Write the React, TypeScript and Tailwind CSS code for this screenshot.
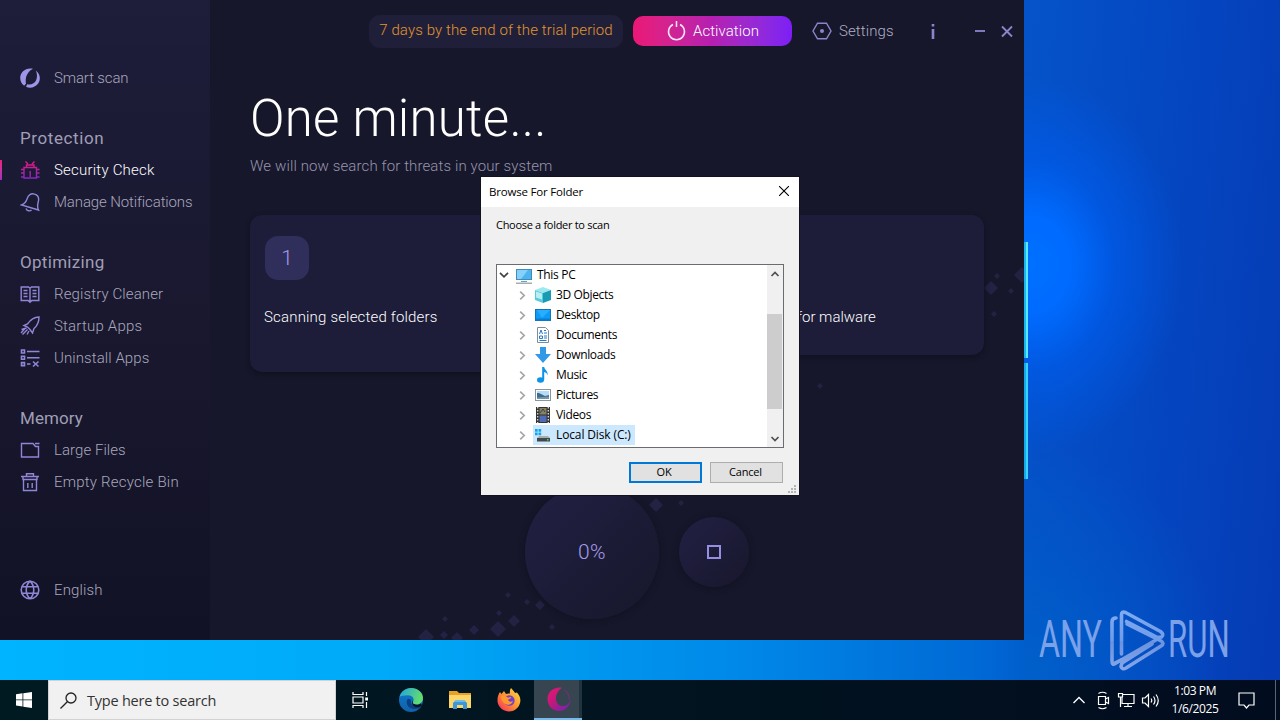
import type { ReactNode } from "react";

const DIAMONDS: [number, number, number][] = [
  [426, 637, 8], [444, 635, 4], [457, 638, 6], [445, 619, 3], [474, 630, 5], [498, 629, 8],
  [514, 621, 6], [499, 613, 3], [508, 595, 3], [527, 602, 3], [540, 605, 5], [552, 627, 3],
  [656, 505, 7], [681, 503, 3], [991, 288, 7], [997, 276, 3], [1011, 291, 3], [1022, 275, 8],
  [994, 314, 3], [820, 386, 3],
];

function Glyph({ children, active = false }: { children: ReactNode; active?: boolean }) {
  return (
    <svg
      width="20"
      height="20"
      viewBox="0 0 20 20"
      fill="none"
      stroke={active ? "url(#hot)" : "#8f87d6"}
      strokeWidth="1.4"
      className="shrink-0"
    >
      {children}
    </svg>
  );
}

function NavItem({ label, icon, active = false, tracking = "" }: { label: string; icon: ReactNode; active?: boolean; tracking?: string }) {
  return (
    <div className="relative flex h-8 items-center gap-[14px] pl-5">
      {active && <span className="absolute left-0 top-[6px] h-5 w-[2px] bg-gradient-to-b from-[#f0197a] to-[#a02fc0]" />}
      <Glyph active={active}>{icon}</Glyph>
      <span className={`whitespace-nowrap text-[15px] font-light leading-5 ${tracking} ${active ? "text-white" : "text-[#a9a8bd]"}`}>{label}</span>
    </div>
  );
}

function NavHeading({ children, tracking }: { children: ReactNode; tracking: string }) {
  return <div className={`flex h-8 items-center pl-5 text-[17px] font-normal leading-5 text-[#a09fb5] ${tracking}`}>{children}</div>;
}

function Sidebar() {
  return (
    <nav className="flex w-[210px] shrink-0 flex-col gap-7 bg-gradient-to-b from-[#1e1d3a] via-[#19182f] to-[#121226] pb-[34px] pt-[62px]">
      <NavItem
        label="Smart scan"
        tracking="tracking-[-0.13px]"
        icon={
          <g stroke="none" fill="#9d95e6">
            <path d="M13 .8C6-.9.2 4 .2 10c0 3.300 1.500 6 4 7.800.8-1 1.300-1.600 1.800-2C4.800 9.500 7.500 3.500 13 .8z" />
            <path d="M15.800 2.500c4.400 3.200 5.200 9 2.400 13-2.900 4-8 5.200-12.200 3.300l1.200-2.600c4 .8 7.600-.7 9-4.200 1.200-3.200 1-6.500-.4-9.500z" />
          </g>
        }
      />
      <div>
        <NavHeading tracking="tracking-[0.6px]">Protection</NavHeading>
        <NavItem
          active
          label="Security Check"
          tracking="tracking-[0.22px]"
          icon={<path d="M4 7.500h12.500v10.500H4zM6.500 7.500V5h7.500v2.500M5.500 1.500l2.500 2.500M14.500 1.500L12 4M1 9.500h3M1 13h3M1 17h3M16.500 9.500H19.500M16.500 13H19.500M16.500 17H19.500M10.200 11v6" />}
        />
        <NavItem
          label="Manage Notifications"
          tracking="tracking-[-0.12px]"
          icon={<path d="M1.500 13c3-1 4.500-3 5.500-6 1.200-4 4-6 7.500-4.900 3.500 1 4.700 4.300 3.700 7.900-.8 3-1 5.500.3 8L1.500 13zM6 16.500c.7 2.300 3.900 3.200 5.500 1.500" />}
        />
      </div>
      <div>
        <NavHeading tracking="tracking-[0.3px]">Optimizing</NavHeading>
        <NavItem
          label="Registry Cleaner"
          tracking="tracking-[0.12px]"
          icon={<path d="M1.200 3h7.300L10 4.300 11.500 3h7.300v13.500h-7L10 18.300l-1.800-1.800h-7zM10 4.300v13.500M3.500 6.500h4M3.500 9.500h4M3.500 12.500h4M12.500 6.500h4M12.500 9.500h4M12.500 12.500h4" />}
        />
        <NavItem
          label="Startup Apps"
          tracking="tracking-[0.2px]"
          icon={<path d="M19 1c-5 .2-8.500 2.500-11.500 7L4 9.500 7.500 11l2.500 2.500 2.500 3.500 1.500-4.500C17.500 9.500 19 6 19 1zM6.500 12l-5 1.500M7.500 13.500l-5 5M9 15l-2 3.500M5 12.500L1 17" />}
        />
        <NavItem
          label="Uninstall Apps"
          tracking="tracking-[0.08px]"
          icon={<path d="M1.500 2h3v3h-3zM1.500 8.300h3v3h-3zM1.500 14.600h3v3h-3zM7 3.500h12.500M7 9.800h12.500M7 16h3.500M13 13.500l5.500 5M18.500 13.500l-5.500 5" strokeWidth="1.600" />}
        />
      </div>
      <div>
        <NavHeading tracking="tracking-[0.1px]">Memory</NavHeading>
        <NavItem
          label="Large Files"
          tracking="tracking-[0.05px]"
          icon={<path d="M1.500 3.500h11.500l2.500 3h3V17H1.500zM15 3.500h4.500" />}
        />
        <NavItem
          label="Empty Recycle Bin"
          tracking="tracking-[0.22px]"
          icon={<path d="M1 4.500h18M3 4.500v3h14v-3M6.500 4V1.800h7V4M3.500 7.500v11h13v-11M7.800 11v5M12.200 11v5" />}
        />
      </div>
      <div className="mt-auto">
        <NavItem
          label="English"
          tracking="tracking-[0.15px]"
          icon={<path d="M10 1.200a8.800 8.800 0 1 0 0 17.600a8.800 8.800 0 1 0 0-17.600M10 1.200c-5 4.800-5 12.800 0 17.600M10 1.200c5 4.800 5 12.800 0 17.600M2 6.800h16M2 13.200h16" strokeWidth="1.600" />}
        />
      </div>
    </nav>
  );
}

function ScannerWindow() {
  return (
    <div className="absolute left-0 top-0 flex h-[640px] w-[1024px] overflow-hidden bg-[#17172b] font-[Roboto,sans-serif]">
      <svg width="1024" height="640" className="absolute left-0 top-0">
        <defs>
          <linearGradient id="hot" gradientUnits="userSpaceOnUse" x1="0" y1="0" x2="0" y2="20">
            <stop offset="0" stopColor="#f01878" />
            <stop offset="1" stopColor="#7a2bc4" />
          </linearGradient>
        </defs>
        {DIAMONDS.map(([x, y, r]) => (
          <path key={`${x}-${y}`} d={`M${x} ${y - r}L${x + r} ${y}L${x} ${y + r}L${x - r} ${y}Z`} fill="#242242" />
        ))}
      </svg>
      <Sidebar />
      <main className="relative flex flex-1 flex-col">
        <header className="flex h-[62px] items-center justify-end pr-[5px]">
          <div className="flex h-[33px] w-[254px] items-center justify-center rounded-[11px] bg-[#201f39] pb-[2px] text-[15px] font-light tracking-[0.12px] text-[#e0952f]">
            <span className="whitespace-nowrap">7 days by the end of the trial period</span>
          </div>
          <div className="ml-[10px] flex h-[30px] w-[159px] items-center justify-center gap-[7px] rounded-[10px] bg-gradient-to-r from-[#eb1675] via-[#b51eb0] to-[#7c1ef5] pl-px text-[15px] font-light tracking-[0.08px] text-white">
            <svg width="19" height="20" viewBox="0 0 19 20" fill="none" stroke="#fbe6fa" strokeWidth="1.5">
              <path d="M6 3.500a8 8 0 1 0 7 0M9.500 0v6" />
            </svg>
            <span>Activation</span>
          </div>
          <div className="ml-5 flex w-[82px] items-center gap-[7px] text-[15px] font-light tracking-[0.1px] text-[#b0afc6]">
            <svg width="20" height="18" viewBox="0 0 20 18" fill="none" stroke="#8b85cc" strokeWidth="1.4" className="shrink-0">
              <path d="M5.500 1.200h9L19 9l-4.500 7.800h-9L1 9z" />
              <circle cx="10" cy="9" r="2" fill="#8b85cc" stroke="none" />
            </svg>
            <span>Settings</span>
          </div>
          <svg width="125" height="20" viewBox="0 0 125 20" fill="none" stroke="#8b85cc" strokeWidth="1.8" className="shrink-0">
            <path d="M39 8v10M39 3v2.500" strokeWidth="2.600" />
            <path d="M81 10h10" />
            <path d="M108 5.500l10 10M118 5.500l-10 10" strokeWidth="1.800" />
          </svg>
        </header>
        <h1 className="ml-10 mt-[26px] h-[62px] whitespace-nowrap text-[51px] font-light leading-[62px] tracking-[0.25px] text-white">One minute...</h1>
        <p className="ml-10 mt-[6px] h-5 whitespace-nowrap text-[15px] font-light leading-5 tracking-[0.12px] text-[#9695ad]">We will now search for threats in your system</p>
        <div className="mx-10 mt-[39px] flex items-start gap-5">
          <section className="h-[157px] w-[357px] shrink-0 rounded-[12px] bg-[#1d1c39] px-[14px] pt-[21px] shadow-[0_2px_5px_#10101f]">
            <div className="ml-px flex size-11 items-center justify-center rounded-[13px] bg-[#302e5a] pt-px text-[21px] font-light text-[#a49ce8]">1</div>
            <div className="mt-[27px] whitespace-nowrap text-[15px] font-light leading-5 tracking-[0.18px] text-white">Scanning selected folders</div>
          </section>
          <section className="h-[140px] w-[357px] shrink-0 rounded-[12px] bg-[#1d1c39] pl-[170px] pt-[92px] shadow-[0_2px_5px_#10101f]">
            <div className="whitespace-nowrap text-[15px] font-light leading-5 text-white">for malware</div>
          </section>
        </div>
        <div className="ml-[315px] mt-[113px] flex items-center gap-5">
          <div className="flex size-[134px] items-center justify-center rounded-full bg-gradient-to-br from-[#222044] to-[#17172b] pt-[2px] text-[21px] font-light tracking-[0.4px] text-[#a49ce8] shadow-[0_1px_6px_#111122]">0%</div>
          <div className="flex size-[70px] items-center justify-center rounded-full bg-gradient-to-br from-[#222044] to-[#18172c] shadow-[0_1px_6px_#111122]">
            <div className="size-[14px] border-2 border-[#968ee0]" />
          </div>
        </div>
      </main>
    </div>
  );
}

const FOLDERS: { name: string; icon: ReactNode; selected?: boolean }[] = [
  {
    name: "3D Objects",
    icon: (
      <>
        <path d="M0 3l8-3 8 3-8 3z" fill="#9ceaf0" />
        <path d="M0 3l8 3v10l-8-3z" fill="#57cbdc" />
        <path d="M16 3l-8 3v10l8-3z" fill="#1a9bb5" />
        <path d="M1 4.500l6 2v6l-6-2z" fill="#b9eff2" />
      </>
    ),
  },
  {
    name: "Desktop",
    icon: (
      <>
        <rect x="0.500" y="2.500" width="15" height="11" fill="#0d9cf5" stroke="#1474ba" />
        <path d="M1 11.500h14v2H1z" fill="#0a7cd2" />
        <path d="M2 3h13l-8 8z" fill="#29adff" />
      </>
    ),
  },
  {
    name: "Documents",
    icon: (
      <>
        <path d="M2.500.5h8l3 3v12h-11z" fill="#fff" stroke="#7f8d99" />
        <path d="M4.500 7l1.500-4 1.500 4M9 3.500h2M9 6h3M4.500 9h3v2.500h-3zM9 9h3M9 11h3M4.500 13.500h7" stroke="#2878c8" fill="none" />
      </>
    ),
  },
  { name: "Downloads", icon: <path d="M5 0h6v7h5l-8 9-8-9h5z" fill="#3298e8" /> },
  {
    name: "Music",
    icon: (
      <>
        <ellipse cx="5.500" cy="13" rx="3.500" ry="2.800" fill="#0c93e8" />
        <path d="M7.200 0h2c.3 3 4.300 4 3.300 8.500-.5-2.200-1.500-3-3.300-3.500v8h-2z" fill="#0c93e8" />
      </>
    ),
  },
  {
    name: "Pictures",
    icon: (
      <>
        <rect x="0.500" y="2.500" width="15" height="11" fill="#fff" stroke="#8c959c" />
        <path d="M2 4h12v8H2z" fill="#b7dcf5" />
        <path d="M2 6c4 0 5 2 8 3l4-1v4H2z" fill="#3b6d92" />
        <path d="M2 10.500l12-1V12H2z" fill="#7595a8" />
      </>
    ),
  },
  {
    name: "Videos",
    icon: (
      <>
        <path d="M1 0h14v16H1z" fill="#333" />
        <path d="M4.500 1h7v6.500h-7z" fill="#8a8352" />
        <path d="M4.500 8.500h7V15h-7z" fill="#4f6cb8" />
        <path d="M2.700 0v16M13.300 0v16" stroke="#ddd" strokeWidth="1.300" strokeDasharray="1.500 1.500" />
        <path d="M5 6l3-4 2 3" stroke="#2c3d87" fill="none" />
      </>
    ),
  },
  {
    name: "Local Disk (C:)",
    selected: true,
    icon: (
      <>
        <path d="M0 2h2.700v2.700H0zM3.500 2h2.700v2.700H3.500zM0 5.500h2.700v2.700H0zM3.500 5.500h2.700v2.700H3.500z" fill="#14a5ee" />
        <path d="M4 9h9l2 2H2z" fill="#a9adb0" />
        <path d="M2 11h13v3.500H2z" fill="#43484a" />
        <path d="M12 12h1.500v1.500H12z" fill="#46e24c" />
      </>
    ),
  },
];

function FolderDialog() {
  return (
    <div className="absolute left-[481px] top-[177px] flex h-[318px] w-[318px] flex-col bg-[#f0f0f0] font-['Open_Sans',sans-serif] text-[12px] text-black shadow-[0_0_0_1px_#11111f]">
      <div className="flex h-[30px] shrink-0 items-center justify-between bg-white pl-2 pr-[10px]">
        <span className="whitespace-nowrap text-[11.500px] tracking-[-0.2px]">Browse For Folder</span>
        <svg width="10" height="10" viewBox="0 0 10 10" stroke="#000" strokeWidth="1.100" className="-mt-[2px]">
          <path d="M0 0l10 10M10 0L0 10" />
        </svg>
      </div>
      <div className="ml-[15px] mt-[10px] h-4 whitespace-nowrap text-[11px] leading-4 tracking-[-0.3px]">Choose a folder to scan</div>
      <div className="ml-[15px] mt-[31px] flex h-[184px] w-[288px] shrink-0 border border-[#696c70] bg-white">
        <div className="flex flex-1 flex-col overflow-hidden">
          <div className="flex h-5 shrink-0 items-center pl-[2px]">
            <svg width="10" height="6" viewBox="0 0 10 6" fill="none" stroke="#404040" strokeWidth="1.700">
              <path d="M1 .8l4 4 4-4" />
            </svg>
            <svg width="16" height="16" viewBox="0 0 16 16" className="ml-[7px] mt-[1px] shrink-0">
              <rect x="0.500" y="1.500" width="15" height="10" fill="#4db4f0" stroke="#428bb5" />
              <path d="M1 2h11L5 11H1z" fill="#86d1fa" />
              <path d="M5 13.500h6" stroke="#5aa6d0" />
              <path d="M0 15.200h16" stroke="#8d989e" strokeWidth="1.200" />
            </svg>
            <span className="ml-[5px] text-[12px] tracking-[-0.3px]">This PC</span>
          </div>
          {FOLDERS.map((f) => (
            <div key={f.name} className="flex h-5 shrink-0 items-center pl-[22px]">
              <svg width="7" height="9" viewBox="0 0 7 9" fill="none" stroke="#a6a6a6" strokeWidth="1.700">
                <path d="M1.200.7L5.200 4.500l-4 3.800" />
              </svg>
              <div className={`ml-[7px] flex h-5 items-center pl-[2px] pr-1 ${f.selected ? "bg-[#cce8ff]" : ""}`}>
                <svg width="16" height="16" viewBox="0 0 16 16" className="shrink-0">
                  {f.icon}
                </svg>
                <span className={`ml-[5px] whitespace-nowrap text-[12px] leading-5 ${f.selected ? "tracking-[-0.13px]" : "tracking-[-0.36px]"}`}>{f.name}</span>
              </div>
            </div>
          ))}
        </div>
        <div className="flex w-4 flex-col items-center bg-[#f0f0f0] pr-px">
          <svg width="10" height="6" viewBox="0 0 10 6" fill="none" stroke="#505050" strokeWidth="1.700" className="mt-[6px] shrink-0">
            <path d="M1.500 5l3.500-3.600L8.500 5" />
          </svg>
          <div className="mt-[37px] h-[95px] w-[15px] bg-[#cdcdcd]" />
          <svg width="10" height="6" viewBox="0 0 10 6" fill="none" stroke="#505050" strokeWidth="1.700" className="mb-[5px] mt-auto shrink-0">
            <path d="M1.500 1l3.500 3.600L8.500 1" />
          </svg>
        </div>
      </div>
      <div className="mt-[14px] flex gap-2 pl-[148px] text-[11px] tracking-[-0.2px]">
        <div className="flex h-[21px] w-[73px] items-center justify-center border-2 border-[#0078d7] bg-[#e1e1e1] pr-[3px]">OK</div>
        <div className="flex h-[21px] w-[73px] items-center justify-center border border-[#adadad] bg-[#e1e1e1] pr-[2px]">Cancel</div>
      </div>
      <svg width="9" height="9" viewBox="0 0 9 9" fill="#b4b4b4" className="absolute bottom-[1px] right-[2px]">
        <path d="M6 0h2v2H6zM3 3h2v2H3zM6 3h2v2H6zM0 6h2v2H0zM3 6h2v2H3zM6 6h2v2H6z" />
      </svg>
    </div>
  );
}

function Watermark() {
  return (
    <div className="absolute left-[1039px] top-[608px] flex h-16 w-[194px] items-center font-[Roboto,sans-serif] text-[52px] leading-[64px] text-[#7ba2e8]">
      <div className="w-[70px] shrink-0">
        <div className="w-max origin-left scale-x-[0.620]">ANY</div>
      </div>
      <svg width="56" height="64" viewBox="1109 608 56 64" className="shrink-0">
        <defs>
          <linearGradient id="wm" gradientUnits="userSpaceOnUse" x1="0" y1="612" x2="0" y2="670">
            <stop offset="0" stopColor="#80abf0" />
            <stop offset="0.500" stopColor="#709be8" />
            <stop offset="0.510" stopColor="#6a92e0" />
            <stop offset="1" stopColor="#86a6e8" />
          </linearGradient>
        </defs>
        <g fill="none" stroke="url(#wm)" strokeWidth="3.600" strokeLinejoin="round" strokeLinecap="round">
          <path d="M1121.500 654V615q0-4 4-2.500l35 19q4 3 1 5.500l-4 .5-31-16" />
          <path d="M1116 618q-4 0-4 4v39q0 5 4 2l40-23" />
          <path d="M1113 664l8-4M1127 624l34 17q4 2.500 0 5l-35 22q-4 2-5-1.500l1-3.500 30-19" />
        </g>
      </svg>
      <div className="w-[64px] shrink-0 pl-[3px]">
        <div className="w-max origin-left scale-x-[0.600]">RUN</div>
      </div>
    </div>
  );
}

function Taskbar() {
  return (
    <footer className="flex h-10 items-stretch bg-gradient-to-r from-[#001a22] via-[#01141f] to-[#020c1f] font-['Open_Sans',sans-serif]">
      <div className="flex w-12 items-center justify-center">
        <svg width="16" height="16" viewBox="0 0 16 16" fill="#fff">
          <path d="M0 2.200l6.500-.9v6.200H0zM7.300 1.200L16 0v7.500H7.300zM0 8.300h6.500v6.200L0 13.600zM7.300 8.300H16V16l-8.700-1.200z" />
        </svg>
      </div>
      <div className="flex w-72 items-center border border-[#d2d2d2] bg-[#f1f1f1] pl-[11px]">
        <svg width="17" height="17" viewBox="0 0 17 17" fill="none" stroke="#222" strokeWidth="1.300">
          <circle cx="11" cy="6" r="5" />
          <path d="M7.300 9.700L.5 16.500" />
        </svg>
        <span className="ml-[10px] mt-px whitespace-nowrap text-[14.500px] tracking-[-0.23px] text-[#333]">Type here to search</span>
      </div>
      <div className="flex w-12 items-center justify-center">
        <svg width="17" height="16" viewBox="0 0 17 16" fill="none" stroke="#fff" strokeWidth="1.200">
          <path d="M1 0v2.500h10V0M1 16v-2.500h10V16M1 5h10v6H1zM14.500 0v4M14.500 10v6" />
          <path d="M13.200 5.500h2.800v3h-2.800z" fill="#fff" stroke="none" />
        </svg>
      </div>
      <div className="flex w-[54px] items-center justify-center">
        <svg width="24" height="24" viewBox="0 0 24 24">
          <defs>
            <linearGradient id="edgeTop" x1="0" y1="0" x2="1" y2="0.300">
              <stop offset="0" stopColor="#21a4dc" />
              <stop offset="1" stopColor="#62dc70" />
            </linearGradient>
            <linearGradient id="edgeLow" x1="0" y1="0" x2="0" y2="1">
              <stop offset="0" stopColor="#0b7cd2" />
              <stop offset="1" stopColor="#1260a8" />
            </linearGradient>
          </defs>
          <circle cx="12" cy="12" r="12" fill="url(#edgeLow)" />
          <path d="M.5 9C2 3.500 6.500 0 12 0c7 0 12 4.500 12 10 0 4-3 6.500-6.500 6.500-3 0-4.500-1.200-3.500-2.500 2-3.500-1-6.700-5-6.700C5 7.300 1.500 8 .5 9z" fill="url(#edgeTop)" />
          <path d="M8 12c-1.500 5 2.500 9 7.500 9 3 0 5-1 7-2.800-1.500.8-3.500 1-5 .8-4-.6-6.500-4-5.500-6.500 0-1.500-3-2.500-4-.5z" fill="#0b3f82" />
          <path d="M13.500 12.500c1 2-.5 2.500 1.500 3.600 2 1.200 5.500.8 7-.8l1 2c-1 1.500-3 2-4.500 2-4 0-6.500-3.300-5-6.800z" fill="#02141f" />
        </svg>
      </div>
      <div className="flex w-11 items-center justify-center">
        <svg width="22" height="18" viewBox="0 0 22 18">
          <path d="M0 0h8l2 2h12v5H0z" fill="#e7a126" />
          <path d="M0 4h22v13H0z" fill="#fdd568" />
          <path d="M4 18v-6l2-2h10l2 2v6h-4v-4H8v4z" fill="#3a97d9" />
          <path d="M6 9h10v2H6z" fill="#6cbced" />
        </svg>
      </div>
      <div className="flex w-[52px] items-center justify-center pl-px">
        <svg width="24" height="24" viewBox="0 0 24 24">
          <defs>
            <linearGradient id="fox" x1="1" y1="0" x2="0" y2="1">
              <stop offset="0" stopColor="#ffe246" />
              <stop offset="0.500" stopColor="#ff9130" />
              <stop offset="1" stopColor="#f52463" />
            </linearGradient>
          </defs>
          <path d="M14 0c2 2 3 3.500 4 5l2-.5C23 8 24 11 23 15c-1.500 5.500-6 8.500-11 8.500S1.500 19.500.7 14.500C0 10.500 1 7 3 4l1.500 2L7 3l2 3c1.500-.5 3-.5 4-.5-.5-2 0-4 1-5.500z" fill="url(#fox)" />
          <circle cx="12.300" cy="12.500" r="5.300" fill="#7041c9" />
          <path d="M4 8c3-1 5 0 6.500 1.500l4-.5c-1 2-3 2-3.500 3 1 2 3 2 5 1-1 4-6 5-9 2-2-2-3-4-3-7z" fill="#ff982d" />
        </svg>
      </div>
      <div className="flex w-[45px] items-center justify-center border-b-2 border-[#75b9ed] bg-[#36454f] pl-1">
        <svg width="24" height="25" viewBox="0 0 24 25">
          <defs>
            <linearGradient id="moon" x1="0" y1="0" x2="1" y2="1">
              <stop offset="0" stopColor="#ec1670" />
              <stop offset="0.450" stopColor="#bd197d" />
              <stop offset="1" stopColor="#6a24b8" />
            </linearGradient>
          </defs>
          <path d="M15 .8C7-.5.5 5 .5 12c0 7 5 12 11.500 12 6.500 0 11.500-5 11.500-12-1 5-4.500 7.500-8.500 7C8 18 6 7 15 .8z" fill="url(#moon)" />
          <path d="M17 3c3.500 2 5.500 5.500 5 9.500" fill="none" stroke="#6b3373" strokeWidth="1.300" />
        </svg>
      </div>
      <div className="w-[3px] border-b-2 border-[#75b9ed] bg-[#1f343f]" />
      <div className="ml-auto flex items-center">
        <svg width="88" height="20" viewBox="0 0 88 20" fill="none" stroke="#fff" strokeWidth="1.200">
          <path d="M1.500 13L7 7.500l5.500 5.500" strokeWidth="1.400" />
          <path d="M26.500 6.500h7v8h-7zM33.500 9l3-1.500v6l-3-1.500M26.500 3.500q4-2.500 8 0M26.500 17.500q4 2.500 8 0" />
          <path d="M50 4.500h12v9H50zM56 13.500v3M52 16.500h8" />
          <path d="M46.500 3.500h4v3.500h-4zM48.500 7v10" fill="#01141f" />
          <path d="M70.500 8h2.500l3.500-3.500v12L73 13h-2.500zM79 8.500q1.500 2 0 4M81.500 6.500q3 4 0 8M84 4.500q4.500 6 0 12" />
        </svg>
        <div className="-ml-[3px] flex w-[76px] flex-col items-center text-[12px] leading-[18px] tracking-[-0.4px] text-white">
          <span>1:03 PM</span>
          <span>1/6/2025</span>
        </div>
        <svg width="17" height="17" viewBox="0 0 17 17" fill="none" stroke="#fff" strokeWidth="1.200" className="ml-[5px]">
          <path d="M1 1h15v12h-5l-2.500 3L6 13H1z" />
        </svg>
        <div className="ml-[20px] mr-1 h-10 w-px bg-[#5a6675]" />
      </div>
    </footer>
  );
}

export default function App() {
  return (
    <div className="flex h-[720px] w-[1280px] flex-col overflow-hidden">
      <div className="relative flex-1 overflow-hidden bg-[#0647bd]">
        <div className="absolute inset-x-0 bottom-0 h-10 bg-[linear-gradient(90deg,#00b4ff_0%,#00aaf8_30%,#0088e8_58%,#0068d4_77%,#0058c8_82%)]" />
        <div className="absolute inset-y-0 right-0 w-[256px] bg-[radial-gradient(ellipse_150px_190px_at_8px_265px,#0070ff_0%,#006bff_25%,#005cecaa_55%,#0450cc00_100%),linear-gradient(95deg,#0553c9_0%,#0448c2_45%,#053bb4_100%)]" />
        <div className="absolute bottom-0 right-0 h-[260px] w-[256px] bg-[radial-gradient(ellipse_200px_240px_at_0px_260px,#0060ca_0%,#0060ca00_100%)]" />
        <div className="absolute left-[1024px] top-[242px] h-[116px] w-[4px] border-r-2 border-[#5ae8fb] bg-[#18b6ee]" />
        <div className="absolute left-[1024px] top-[363px] h-[116px] w-[4px] border-r-2 border-[#35d4f8] bg-[#13a9ea]" />
        <ScannerWindow />
        <FolderDialog />
        <Watermark />
      </div>
      <Taskbar />
    </div>
  );
}
